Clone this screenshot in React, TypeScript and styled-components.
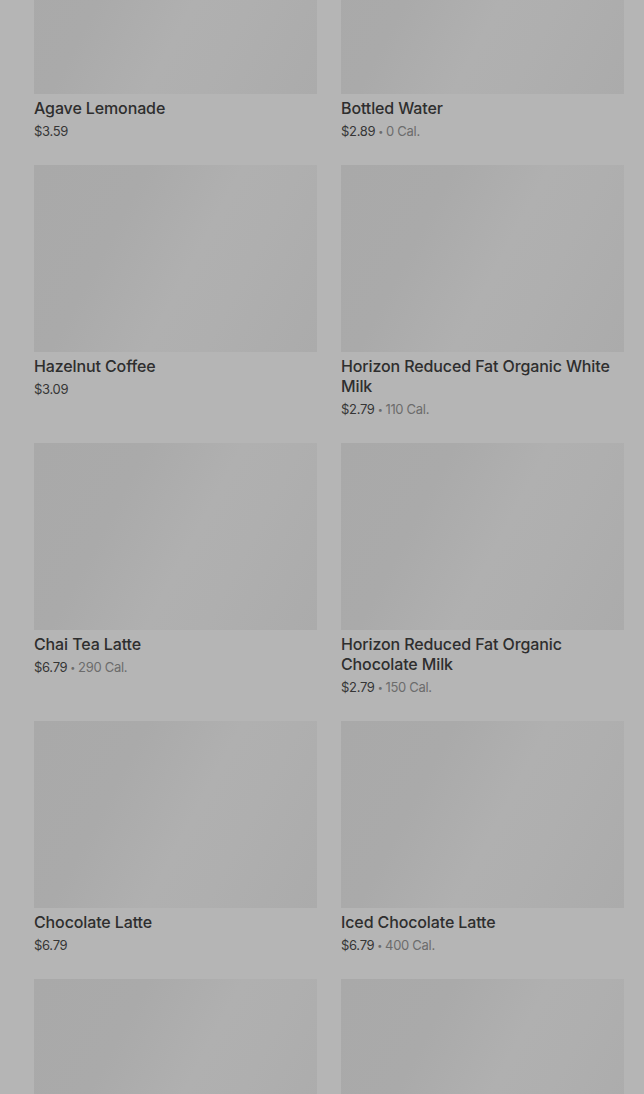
import React from "react";
import styled, { createGlobalStyle } from "styled-components";

const GlobalStyle = createGlobalStyle`
  html, body {
    margin: 0;
    padding: 0;
    overflow: hidden;
    background: #b5b5b5;
  }
  body {
    font-family: "Inter", "Roboto", "Liberation Sans", sans-serif;
    -webkit-font-smoothing: antialiased;
  }
`;

const Page = styled.div`
  width: 644px;
  height: 1094px;
  overflow: hidden;
  background: #b5b5b5;
`;

const Grid = styled.div`
  display: grid;
  grid-template-columns: 283px 283px;
  column-gap: 24px;
  row-gap: 24px;
  align-items: start;
  padding: 0 20px 0 34px;
  margin-top: -93px;
`;

const Card = styled.div`
  display: flex;
  flex-direction: column;
`;

const Thumb = styled.div`
  height: 187px;
  width: 100%;
  background: linear-gradient(
    118deg,
    #a9a9a9 0%,
    #aaaaaa 30%,
    #b0b0b0 55%,
    #afafaf 70%,
    #ababab 100%
  );
`;

const Name = styled.div`
  margin-top: 4px;
  font-size: 16px;
  line-height: 20px;
  font-weight: 500;
  color: #2e2e2e;
  letter-spacing: -0.12px;
`;

const Meta = styled.div`
  margin-top: 3px;
  height: 20px;
  display: flex;
  align-items: center;
  gap: 3px;
  font-size: 13px;
  line-height: 20px;
  color: #363636;
  letter-spacing: -0.3px;
`;

const Cal = styled.span`
  color: #6c6c6c;
`;

const Dot = styled.span`
  color: #6c6c6c;
  font-size: 9px;
  line-height: 1;
`;

type Item = { id: string; name?: string; price?: string; cal?: string };

const items: Item[] = [
  { id: "a", name: "Agave Lemonade", price: "$3.59" },
  { id: "b", name: "Bottled Water", price: "$2.89", cal: "0 Cal." },
  { id: "c", name: "Hazelnut Coffee", price: "$3.09" },
  { id: "d", name: "Horizon Reduced Fat Organic White Milk", price: "$2.79", cal: "110 Cal." },
  { id: "e", name: "Chai Tea Latte", price: "$6.79", cal: "290 Cal." },
  { id: "f", name: "Horizon Reduced Fat Organic Chocolate Milk", price: "$2.79", cal: "150 Cal." },
  { id: "g", name: "Chocolate Latte", price: "$6.79" },
  { id: "h", name: "Iced Chocolate Latte", price: "$6.79", cal: "400 Cal." },
  { id: "i" },
  { id: "j" },
];

export default function App() {
  return (
    <Page>
      <GlobalStyle />
      <Grid>
        {items.map((it) => (
          <Card key={it.id}>
            <Thumb />
            {it.name && <Name>{it.name}</Name>}
            {it.price && (
              <Meta>
                <span>{it.price}</span>
                {it.cal && (
                  <>
                    <Dot>•</Dot>
                    <Cal>{it.cal}</Cal>
                  </>
                )}
              </Meta>
            )}
          </Card>
        ))}
      </Grid>
    </Page>
  );
}
